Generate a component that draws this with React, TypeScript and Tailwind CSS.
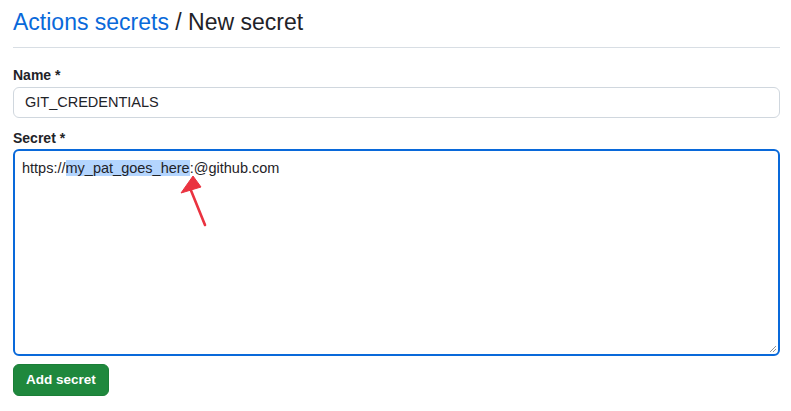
import React from "react";

export default function App() {
  return (
    <div
      className="w-[791px] h-[411px] bg-white pl-[13px] pr-[11px] pt-[6px]"
      style={{ fontFamily: '"Liberation Sans", Arial, sans-serif' }}
    >
      <h1 className="text-[23px] leading-[32px] font-normal text-[#1f2328] pb-[9px] border-b border-[#d8dee4]">
        <span className="text-[#0969da]">Actions secrets</span> / New secret
      </h1>
      <div className="pt-[18px]">
        <label className="block text-[14px] leading-[18px] font-bold text-[#1f2328]">Name *</label>
        <div className="mt-[3px] h-[31px] border border-[#d0d7de] rounded-[6px] px-[11px] flex items-center text-[14.5px] text-[#1f2328] bg-white">
          GIT_CREDENTIALS
        </div>
        <label className="block mt-[11px] text-[14px] leading-[18px] font-bold text-[#1f2328]">Secret *</label>
        <div className="relative mt-[2px] h-[207px] border-2 border-[#0969da] rounded-[6px] px-[7px] pt-[7px] text-[14.5px] leading-[21px] text-[#1f2328] bg-white">
          <span>https://</span>
          <span className="bg-[#b4d5fe]">my_pat_goes_here</span>
          <span>:@github.com</span>
          <svg className="absolute left-[160px] top-[20px]" width="40" height="60" viewBox="0 0 40 60">
            <line x1="15" y1="17" x2="30" y2="54" stroke="#ea3340" strokeWidth="2.6" strokeLinecap="round" />
            <polygon points="18,5 6,22 26,16" fill="#ea3340" strokeLinejoin="round" stroke="#ea3340" strokeWidth="1" />
          </svg>
          <svg className="absolute right-[1px] bottom-[1px]" width="9" height="9" viewBox="0 0 9 9">
            <line x1="2" y1="8" x2="8" y2="2" stroke="#777" strokeWidth="0.8" />
            <line x1="5" y1="8" x2="8" y2="5" stroke="#777" strokeWidth="0.8" />
          </svg>
        </div>
        <button className="mt-[8px] h-[32px] px-[12px] rounded-[6px] bg-[#1f883d] text-white text-[13.5px] font-bold border border-[#1a7f37]">
          Add secret
        </button>
      </div>
    </div>
  );
}
